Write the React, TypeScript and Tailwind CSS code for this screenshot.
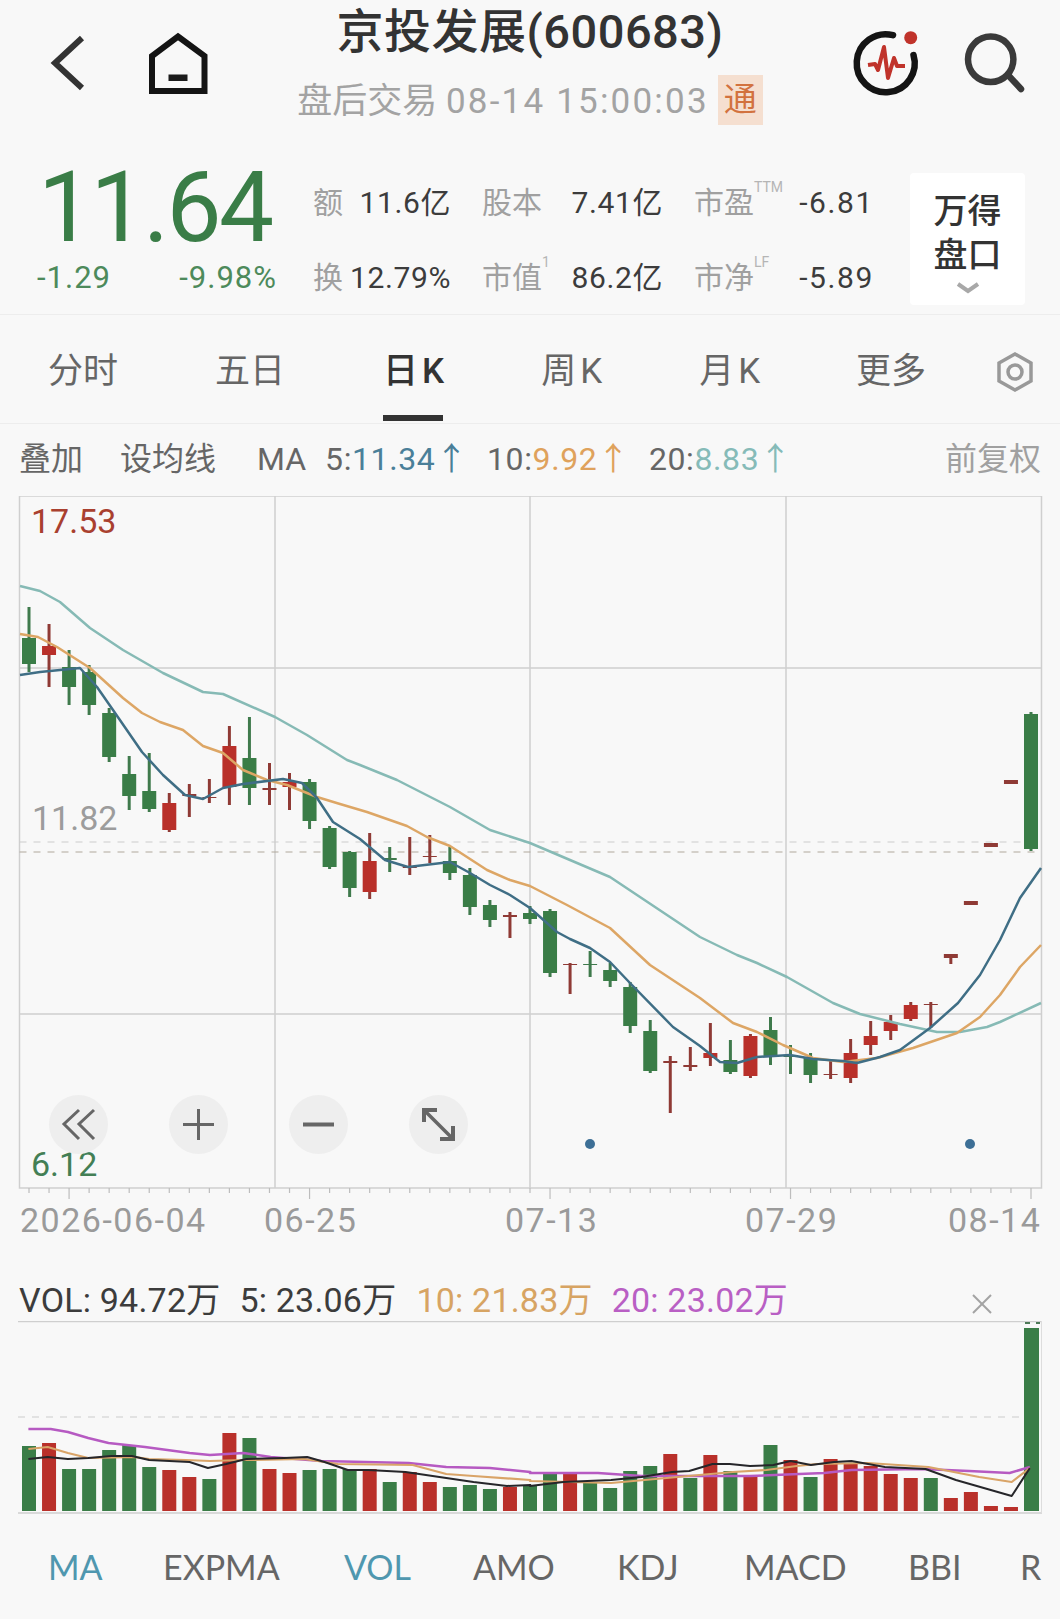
import React from "react";

type C = [number, number, number, number, "g" | "r"];
const candles: C[] = [
  [607, 638, 664, 672, "g"], [624, 646, 655, 687, "r"], [650, 667, 687, 705, "g"], [665, 672, 705, 715, "g"],
  [708, 713, 757, 762, "g"], [756, 774, 796, 810, "g"], [753, 791, 809, 812, "g"], [793, 803, 830, 832, "r"],
  [784, 794, 796, 817, "r"], [779, 797, 798, 803, "r"], [726, 746, 787, 805, "r"], [717, 758, 788, 805, "g"],
  [763, 788, 790, 805, "r"], [773, 782, 787, 810, "r"], [779, 782, 821, 829, "g"], [826, 828, 867, 869, "g"],
  [851, 852, 888, 897, "g"], [833, 861, 892, 899, "r"], [847, 858, 860, 872, "g"], [837, 866, 868, 875, "r"],
  [835, 856, 857, 863, "r"], [847, 861, 873, 880, "g"], [868, 875, 907, 915, "g"], [900, 905, 920, 927, "g"],
  [912, 915, 917, 938, "r"], [906, 913, 919, 924, "g"], [909, 911, 973, 977, "g"], [963, 964, 965, 994, "r"],
  [951, 964, 965, 977, "g"], [963, 970, 981, 987, "g"], [982, 987, 1026, 1033, "g"], [1020, 1031, 1071, 1073, "g"],
  [1056, 1061, 1063, 1113, "r"], [1047, 1065, 1067, 1071, "r"], [1023, 1053, 1058, 1066, "r"], [1040, 1060, 1072, 1074, "g"],
  [1034, 1036, 1076, 1078, "r"], [1017, 1030, 1057, 1065, "g"], [1045, 1055, 1057, 1074, "g"], [1053, 1058, 1075, 1083, "g"],
  [1060, 1074, 1075, 1079, "r"], [1039, 1053, 1078, 1083, "r"], [1021, 1036, 1045, 1055, "r"], [1015, 1022, 1031, 1040, "r"],
  [1002, 1005, 1019, 1021, "r"], [1002, 1004, 1005, 1028, "r"], [954, 954, 958, 964, "r"], [901, 901, 905, 905, "r"],
  [843, 843, 847, 847, "r"], [780, 780, 784, 784, "r"], [712, 714, 849, 851, "g"],
];
const cx = (i: number) => 29 + 20.04 * i;

const ma5 = "20,675 40,672 80,668 97,687 113,710 142,752 163,775 185,795 203,799 223,788 243,784 283,779 302,783 317,798 333,822 360,839 385,860 408,867 450,862 470,873 490,885 510,895 530,908 557,932 570,939 590,948 610,962 630,983 673,1027 700,1046 720,1062 737,1063 757,1057 790,1055 813,1059 843,1061 857,1063 880,1057 900,1050 930,1028 958,1003 980,975 1000,940 1020,898 1041,868";
const ma10 = "20,634 38,637 57,647 90,668 123,698 142,713 160,722 183,730 203,746 223,753 243,770 267,780 287,785 317,797 340,804 367,812 407,826 427,837 450,846 487,870 510,880 530,886 567,905 610,928 650,965 700,998 733,1023 757,1032 783,1045 813,1058 843,1062 877,1058 913,1048 957,1033 980,1017 1000,995 1020,967 1041,945";
const ma20 = "20,586 40,591 60,602 90,628 123,650 163,673 203,692 223,694 275,717 307,735 347,760 360,765 397,780 450,807 490,830 530,843 610,877 700,937 737,955 757,963 787,977 833,1003 860,1014 900,1024 937,1032 960,1032 987,1027 1000,1022 1041,1003";

const volTops: [number, "g" | "r"][] = [
  [1446, "g"], [1443, "r"], [1469, "g"], [1469, "g"], [1450, "g"], [1445, "g"], [1467, "g"], [1470, "r"], [1477, "r"], [1479, "g"],
  [1433, "r"], [1438, "g"], [1469, "r"], [1473, "r"], [1470, "g"], [1469, "g"], [1469, "g"], [1469, "r"], [1482, "g"], [1472, "r"],
  [1482, "r"], [1487, "g"], [1485, "g"], [1489, "g"], [1487, "r"], [1485, "g"], [1473, "g"], [1473, "r"], [1483, "g"], [1488, "g"],
  [1471, "g"], [1466, "g"], [1454, "r"], [1478, "g"], [1455, "r"], [1471, "g"], [1476, "r"], [1445, "g"], [1460, "r"], [1477, "g"],
  [1459, "r"], [1464, "r"], [1466, "r"], [1474, "r"], [1478, "r"], [1478, "g"], [1498, "r"], [1492, "r"], [1506, "r"], [1507, "r"], [1328, "g"],
];
const fix = (pts: number[][]) =>
  pts.map(([x, y]) => `${(x < 530 ? x * 1.014 : 530 + (x - 530) * 1.014).toFixed(1)},${y}`).join(" ");
const vol5 = fix([[28,1459],[47,1457],[67,1459],[87,1458],[110,1456],[130,1456],[147,1460],[187,1462],[205,1468],[223,1464],[243,1459],[280,1458],[303,1457],[320,1462],[343,1470],[363,1470],[400,1472],[440,1478],[467,1482],[500,1486],[523,1485],[530,1486],[563,1482],[610,1480],[640,1477],[670,1472],[687,1471],[710,1464],[727,1464],[747,1466],[770,1465],[787,1461],[807,1465],[830,1462],[847,1461],[880,1467],[920,1469],[950,1480],[1005,1496],[1023,1468]]);
const vol10 = fix([[28,1449],[47,1447],[67,1453],[87,1458],[133,1457],[147,1459],[183,1460],[207,1461],[240,1460],[300,1459],[333,1464],[407,1465],[440,1474],[467,1476],[523,1480],[530,1481],[610,1483],[643,1480],[697,1475],[730,1472],[763,1470],[793,1466],[813,1464],[863,1463],[923,1467],[973,1477],[1005,1482],[1023,1468]]);
const vol20 = fix([[28,1429],[50,1429],[67,1432],[87,1438],[107,1443],[143,1447],[187,1453],[207,1455],[240,1453],[267,1457],[317,1461],[403,1463],[440,1467],[483,1468],[523,1472],[530,1473],[597,1473],[640,1476],[677,1476],[747,1476],[820,1473],[847,1470],[917,1469],[963,1471],[1003,1473],[1023,1467]]);

const GREEN = "#3a7d47";
const RED = "#b9302a";

function Stat({ label, value, sup, wide }: { label: string; value: string; sup?: string; wide?: boolean }) {
  return (
    <div className="flex items-center justify-between">
      <span className="relative text-[#a0a0a0]">
        {label}
        {sup && <span className="absolute top-[15px] left-full text-[14px] leading-none text-[#b5b5b5]">{sup}</span>}
      </span>
      <span className={wide ? "tracking-[1.6px] text-[#3c3c3c]" : "tracking-[0.6px] text-[#3c3c3c]"}>{value}</span>
    </div>
  );
}

function Circle({ children, x }: { children: React.ReactNode; x: string }) {
  return (
    <div className={`absolute top-[599px] flex h-[59px] w-[59px] items-center justify-center rounded-full bg-[#eeeeee] ${x}`}>
      <svg width="59" height="59" viewBox="0 0 59 59" fill="none" stroke="#666666" strokeWidth="3">
        {children}
      </svg>
    </div>
  );
}

export default function App() {
  return (
    <div className="relative h-[1619px] w-[1060px] overflow-hidden bg-[#f8f8f8] [font-family:Roboto,'Noto_Sans_CJK_SC',sans-serif]">
      {/* header */}
      <header className="flex h-[143px] items-start">
        <svg className="shrink-0" width="240" height="143" viewBox="0 0 240 143" fill="none">
          <polyline points="82,38 55,63 82,88" stroke="#333333" strokeWidth="6" />
          <path d="M178 36.5 L204.5 56 V91 H152 V56 Z" stroke="#141414" strokeWidth="6" />
          <rect x="168.5" y="74.5" width="19" height="6.5" fill="#1b1b1b" />
        </svg>
        <div className="flex w-[580px] flex-col items-center">
          <div className="mt-[1px] text-[47px] leading-[62px] font-medium tracking-[0.5px] text-[#333333]">京投发展(600683)</div>
          <div className="mt-[10px] flex items-center">
            <span className="mt-[4px] text-[35px] leading-[50px] text-[#a3a3a3]">
              盘后交易 <span className="tracking-[2.2px]">08-14 15:00:03</span>
            </span>
            <span className="ml-[9px] flex h-[50px] w-[45px] items-center justify-center bg-[#f5dfd0] text-[33px] text-[#d2723f]">通</span>
          </div>
        </div>
        <svg className="shrink-0" width="240" height="143" viewBox="820 0 240 143" fill="none">
          <path d="M893 35.2 A29 29 0 1 0 913.5 55" stroke="#141414" strokeWidth="6.5" strokeLinecap="round" />
          <circle cx="910.7" cy="37.7" r="6.5" fill="#c0332b" />
          <polyline points="868,65 875,64 878,70 884,47 888,78 894,58 897,66 905,66" stroke="#c0332b" strokeWidth="4" strokeLinejoin="round" />
          <circle cx="990.7" cy="59.3" r="22.7" stroke="#3a3a3a" strokeWidth="6.5" />
          <line x1="1008" y1="75" x2="1021" y2="89" stroke="#3a3a3a" strokeWidth="6.5" strokeLinecap="round" />
        </svg>
      </header>

      {/* quote */}
      <section className="flex h-[172px] items-start border-b border-[#ededed]">
        <div className="ml-[37px] flex w-[240px] flex-col">
          <div className="mt-[18px] ml-[1px] text-[98px] leading-[94px] tracking-[-2.5px] text-[#3a7d47]">11.64</div>
          <div className="mt-[5px] flex justify-between text-[31px] leading-[36px] tracking-[1px] text-[#4d8a5b]">
            <span>-1.29</span>
            <span>-9.98%</span>
          </div>
        </div>
        <div className="mt-[22px] ml-[36px] grid grid-cols-[138px_181px_180px] grid-rows-[75px_75px] gap-x-[31px] text-[30px] leading-[75px]">
          <Stat label="额" value="11.6亿" />
          <Stat label="股本" value="7.41亿" />
          <Stat label="市盈" value="-6.81" sup="TTM" wide />
          <Stat label="换" value="12.79%" />
          <Stat label="市值" value="86.2亿" sup="1" />
          <Stat label="市净" value="-5.89" sup="LF" wide />
        </div>
        <div className="mt-[30px] ml-[36px] flex h-[132px] w-[115px] flex-col items-center rounded-[4px] bg-white pt-[16px] text-[34px] leading-[44px] font-medium text-[#333333]">
          <span>万得</span>
          <span>盘口</span>
          <svg className="mt-[5px]" width="26" height="12" viewBox="0 0 26 12" fill="none">
            <polyline points="3,2 13,9 23,2" stroke="#a8a8a8" strokeWidth="4" />
          </svg>
        </div>
      </section>

      {/* period tabs */}
      <nav className="relative flex h-[109px] items-center border-b border-[#ededed] pt-[6px] text-[35px] text-[#666666]">
        <span className="ml-[48px]">分时</span>
        <span className="ml-[97px]">五日</span>
        <span className="relative ml-[98px] font-medium tracking-[4px] text-[#333333]">
          日K
          <span className="absolute top-[69px] left-[0px] h-[6px] w-[60px] bg-[#333333]" />
        </span>
        <span className="ml-[93px] tracking-[4px]">周K</span>
        <span className="ml-[93px] tracking-[4px]">月K</span>
        <span className="ml-[92px]">更多</span>
        <svg className="ml-[70px]" width="38" height="42" viewBox="0 0 38 42" fill="none" stroke="#999999">
          <path d="M19 3 L35 12 V30 L19 39 L3 30 V12 Z" strokeWidth="3.5" />
          <circle cx="19" cy="21" r="7" strokeWidth="3.5" />
        </svg>
      </nav>

      {/* MA row */}
      <div className="flex h-[72px] items-center pb-[3px] text-[32px] whitespace-nowrap text-[#666666]">
        <span className="ml-[19px] w-[64px]">叠加</span>
        <span className="ml-[37px] w-[96px]">设均线</span>
        <span className="ml-[41px]">MA</span>
        <span className="ml-[19px] tracking-[0.6px]">5:<span className="text-[#4a7f98]">11.34↑</span></span>
        <span className="ml-[19px] tracking-[0.6px]">10:<span className="text-[#dfa25c]">9.92↑</span></span>
        <span className="ml-[19px] tracking-[0.6px]">20:<span className="text-[#86bbb8]">8.83↑</span></span>
        <span className="mr-[19px] ml-auto text-[#a0a0a0]">前复权</span>
      </div>

      {/* K chart */}
      <div className="relative h-[704px]">
        <svg className="block" width="1060" height="704" viewBox="0 496 1060 704" fill="none">
          <g stroke="#cfcfcf" strokeWidth="1.5">
            <rect x="19.5" y="496" width="1022" height="692" />
            <line x1="275" y1="496" x2="275" y2="1188" />
            <line x1="530" y1="496" x2="530" y2="1188" />
            <line x1="786" y1="496" x2="786" y2="1188" />
            <line x1="19.5" y1="668" x2="1041" y2="668" />
            <line x1="19.5" y1="1014" x2="1041" y2="1014" />
          </g>
          <line x1="19.5" y1="842" x2="1041" y2="842" stroke="#cccccc" strokeWidth="1" strokeDasharray="7 7" />
          <line x1="19.5" y1="852" x2="1041" y2="852" stroke="#b0a89c" strokeWidth="1" strokeDasharray="7 7" />
          {candles.map(([wt, bt, bb, wb, k], i) => {
            const color = k === "g" ? GREEN : RED;
            const wick = k === "g" ? "#3f7a4c" : "#8f3a35";
            const thin = bb - bt < 5;
            return (
              <g key={i}>
                <line x1={cx(i)} x2={cx(i)} y1={wt} y2={wb} stroke={wick} strokeWidth="3" />
                <rect x={cx(i) - 7} y={bt} width="14" height={bb - bt} fill={thin ? wick : color} />
              </g>
            );
          })}
          <polyline points={ma20} stroke="#86bab5" strokeWidth="2.5" strokeLinejoin="round" />
          <polyline points={ma10} stroke="#dda665" strokeWidth="2.5" strokeLinejoin="round" />
          <polyline points={ma5} stroke="#3f6e85" strokeWidth="2.5" strokeLinejoin="round" />
          <circle cx="590" cy="1144" r="5" fill="#3d6f96" />
          <circle cx="970" cy="1144" r="5" fill="#3d6f96" />
          {candles.map((_, i) => (
            <line key={i} x1={cx(i)} x2={cx(i)} y1="1188" y2={i % 12 === 2 ? 1199 : 1193} stroke="#bdbdbd" strokeWidth="1.2" />
          ))}
        </svg>
        <span className="absolute top-[5px] left-[31px] text-[34px] leading-[40px] text-[#a9402f]">17.53</span>
        <span className="absolute top-[302px] left-[32px] text-[34px] leading-[40px] text-[#9c9c9c]">11.82</span>
        <span className="absolute top-[648px] left-[31px] text-[34px] leading-[40px] text-[#437f55]">6.12</span>
        <Circle x="left-[49px]">
          <polyline points="30,15 15,29 30,44" />
          <polyline points="45,15 30,29 45,44" />
        </Circle>
        <Circle x="left-[169px]">
          <line x1="14" y1="29.5" x2="45" y2="29.5" />
          <line x1="29.5" y1="14" x2="29.5" y2="45" />
        </Circle>
        <Circle x="left-[289px]">
          <line x1="14" y1="29.5" x2="45" y2="29.5" strokeWidth="4" />
        </Circle>
        <Circle x="left-[409px]">
          <line x1="16" y1="16" x2="43" y2="43" strokeWidth="3.5" />
          <polyline points="15,27 15,15 28,15" strokeWidth="4" />
          <polyline points="44,31 44,44 31,44" strokeWidth="4" />
        </Circle>
      </div>

      {/* dates */}
      <div className="flex h-[50px] items-start text-[34px] leading-[40px] tracking-[1.5px] text-[#9a9a9a]">
        <span className="ml-[20px] w-[244px]">2026-06-04</span>
        <span className="w-[241px]">06-25</span>
        <span className="w-[240px]">07-13</span>
        <span className="w-[203px]">07-29</span>
        <span>08-14</span>
      </div>

      {/* volume */}
      <div className="relative flex h-[71px] items-center pt-[29px] text-[34px] tracking-[0.2px] whitespace-nowrap text-[#3c3c3c]">
        <span className="ml-[19px]">VOL: 94.72万</span>
        <span className="ml-[19px]">5: 23.06万</span>
        <span className="ml-[20px] text-[#d7a463]">10: 21.83万</span>
        <span className="ml-[19px] text-[#b95fc4]">20: 23.02万</span>
        <svg className="absolute top-[43px] left-[971px]" width="22" height="22" viewBox="0 0 22 22" stroke="#a3a3a3" strokeWidth="2">
          <line x1="2" y1="2" x2="20" y2="20" />
          <line x1="20" y1="2" x2="2" y2="20" />
        </svg>
      </div>
      <svg className="block" width="1060" height="193" viewBox="0 1321 1060 193" fill="none">
        <line x1="18" y1="1321.5" x2="1042" y2="1321.5" stroke="#cfcfcf" strokeWidth="1.5" />
        <line x1="18" y1="1513" x2="1042" y2="1513" stroke="#cfcfcf" strokeWidth="1.5" />
        <line x1="1041.5" y1="1321" x2="1041.5" y2="1513" stroke="#dddddd" strokeWidth="1" />
        <line x1="18" y1="1417" x2="1022" y2="1417" stroke="#cccccc" strokeWidth="1" strokeDasharray="7 7" />
        {volTops.map(([t, k], i) => (
          <rect key={i} x={cx(i) - 7} y={t} width={i === 50 ? 15 : 14} height={1511 - t} fill={k === "g" ? GREEN : RED} />
        ))}
        <rect x="1025" y="1322" width="5" height="2" fill="#4d7a58" />
        <rect x="1036" y="1322" width="4" height="2" fill="#4d7a58" />
        <polyline points={vol20} stroke="#b65ac2" strokeWidth="2.5" strokeLinejoin="round" />
        <polyline points={vol10} stroke="#d9a468" strokeWidth="2.2" strokeLinejoin="round" />
        <polyline points={vol5} stroke="#26262a" strokeWidth="2" strokeLinejoin="round" />
      </svg>

      {/* indicator tabs */}
      <nav className="flex h-[105px] items-center overflow-hidden text-[34px] whitespace-nowrap text-[#666666] [font-family:Lato,Roboto,sans-serif]">
        <span className="ml-[48px] w-[115px] text-[#4f97af]">MA</span>
        <span className="w-[181px]">EXPMA</span>
        <span className="w-[129px] text-[#4f97af]">VOL</span>
        <span className="w-[144px]">AMO</span>
        <span className="w-[127px]">KDJ</span>
        <span className="w-[164px]">MACD</span>
        <span className="w-[112px]">BBI</span>
        <span>R</span>
      </nav>
    </div>
  );
}
